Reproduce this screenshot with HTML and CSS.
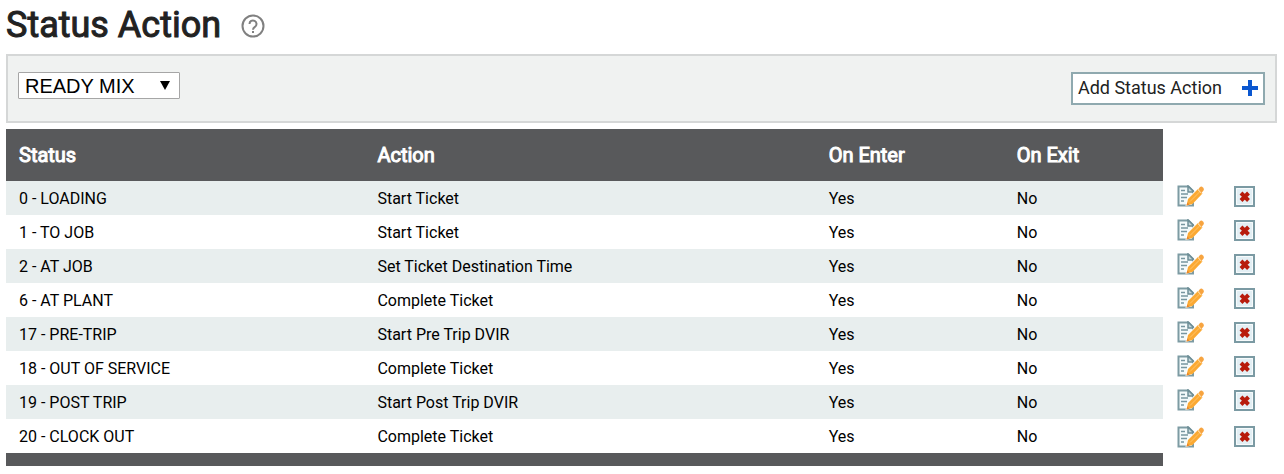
FILE: index.html
```html
<!DOCTYPE html>
<html lang="en">
<head>
    <meta charset="UTF-8">
    <meta name="viewport" content="width=device-width, initial-scale=1.0">
    <title>Status Action</title>
    <link rel="stylesheet" href="styles.css">
</head>
<body>

<!-- row icons -->
<svg class="sprite" aria-hidden="true">
    <symbol id="icon-edit" viewBox="0 0 27 22">
        <path d="M1.5 1.5h10l4.500 4.500v14.500H1.500z" fill="#f4fafb" stroke="#7d9ba3" stroke-width="2"/>
        <path d="M11 1v6h6z" fill="#c5d6da" stroke="#6d8e97" stroke-width="1.500"/>
        <path d="M4 5.500h4M4 9h7M4 12.500h6M4 16h3" stroke="#7796a0" stroke-width="1.600"/>
        <path d="M8.500 21l1.500-7L21.500 2q2-1.500 4 .5t1 4L14.500 19.500z" fill="#fff"/>
        <path d="M9.500 20.500l1.500-6.500L21 4l4.500 4.500L15.500 19z" fill="#fba933"/>
        <path d="M21.500 4l1.500-2q1.500-1 3 .5t.5 3L24.500 8z" fill="#f7a440"/>
        <path d="M13 16.500l9.500-9.500" stroke="#ffc56b" stroke-width="1"/>
        <path d="M20.500 4.500l4 4" stroke="#ffd493" stroke-width="1"/>
        <path d="M9.500 20.500l.8-3 2.200 2z" fill="#e8862c"/>
    </symbol>
    <symbol id="icon-delete" viewBox="0 0 21 21">
        <path d="M1 1h19v19H1z" fill="#e3eff4" stroke="#7b9aa3" stroke-width="2"/>
        <path d="M2.500 2.500h16v16h-16z" fill="none" stroke="#f7fbfc"/>
        <path d="M7 7l7.500 7.500M14.500 7L7 14.500" stroke="#b81c0c" stroke-width="4"/>
    </symbol>
</svg>

<header class="page-header">
    <h1>Status Action</h1>
    <button class="help" type="button" aria-label="Help">
        <svg width="24" height="24" viewBox="0 0 24 24" fill="none" stroke="#808080" stroke-width="2">
            <circle cx="12" cy="12" r="10.500"/>
            <path d="M8.500 10a3.500 3.500 0 1 1 5.500 2.800c-1.300 1-2 1.500-2 3"/>
            <path d="M12 17v2"/>
        </svg>
    </button>
</header>

<div class="toolbar">
    <div class="select-box">
        <select class="product" aria-label="Product">
            <option>READY MIX</option>
        </select>
        <svg class="arrow" width="10" height="10" viewBox="0 0 10 10"><path d="M0 1h10L5 10z"/></svg>
    </div>
    <button class="add" type="button">
        Add Status Action
        <svg width="16" height="16" viewBox="0 0 16 16"><path d="M6 0h4v6h6v4h-6v6H6v-6H0V6h6z" fill="#0b57d0"/></svg>
    </button>
</div>

<table class="grid">
    <colgroup>
        <col class="col-status">
        <col class="col-action">
        <col class="col-enter">
        <col>
        <col class="col-icon">
        <col class="col-icon">
    </colgroup>
    <thead>
        <tr><th>Status</th><th>Action</th><th>On Enter</th><th>On Exit</th></tr>
    </thead>
    <tbody>
        <tr>
            <td>0 - LOADING</td><td>Start Ticket</td><td>Yes</td><td>No</td>
            <td class="tool"><button type="button" aria-label="Edit"><svg width="27" height="22"><use href="#icon-edit"/></svg></button></td>
            <td class="tool"><button type="button" aria-label="Delete"><svg width="21" height="21"><use href="#icon-delete"/></svg></button></td>
        </tr>
        <tr>
            <td>1 - TO JOB</td><td>Start Ticket</td><td>Yes</td><td>No</td>
            <td class="tool"><button type="button" aria-label="Edit"><svg width="27" height="22"><use href="#icon-edit"/></svg></button></td>
            <td class="tool"><button type="button" aria-label="Delete"><svg width="21" height="21"><use href="#icon-delete"/></svg></button></td>
        </tr>
        <tr>
            <td>2 - AT JOB</td><td>Set Ticket Destination Time</td><td>Yes</td><td>No</td>
            <td class="tool"><button type="button" aria-label="Edit"><svg width="27" height="22"><use href="#icon-edit"/></svg></button></td>
            <td class="tool"><button type="button" aria-label="Delete"><svg width="21" height="21"><use href="#icon-delete"/></svg></button></td>
        </tr>
        <tr>
            <td>6 - AT PLANT</td><td>Complete Ticket</td><td>Yes</td><td>No</td>
            <td class="tool"><button type="button" aria-label="Edit"><svg width="27" height="22"><use href="#icon-edit"/></svg></button></td>
            <td class="tool"><button type="button" aria-label="Delete"><svg width="21" height="21"><use href="#icon-delete"/></svg></button></td>
        </tr>
        <tr>
            <td>17 - PRE-TRIP</td><td>Start Pre Trip DVIR</td><td>Yes</td><td>No</td>
            <td class="tool"><button type="button" aria-label="Edit"><svg width="27" height="22"><use href="#icon-edit"/></svg></button></td>
            <td class="tool"><button type="button" aria-label="Delete"><svg width="21" height="21"><use href="#icon-delete"/></svg></button></td>
        </tr>
        <tr>
            <td>18 - OUT OF SERVICE</td><td>Complete Ticket</td><td>Yes</td><td>No</td>
            <td class="tool"><button type="button" aria-label="Edit"><svg width="27" height="22"><use href="#icon-edit"/></svg></button></td>
            <td class="tool"><button type="button" aria-label="Delete"><svg width="21" height="21"><use href="#icon-delete"/></svg></button></td>
        </tr>
        <tr>
            <td>19 - POST TRIP</td><td>Start Post Trip DVIR</td><td>Yes</td><td>No</td>
            <td class="tool"><button type="button" aria-label="Edit"><svg width="27" height="22"><use href="#icon-edit"/></svg></button></td>
            <td class="tool"><button type="button" aria-label="Delete"><svg width="21" height="21"><use href="#icon-delete"/></svg></button></td>
        </tr>
        <tr>
            <td>20 - CLOCK OUT</td><td>Complete Ticket</td><td>Yes</td><td>No</td>
            <td class="tool"><button type="button" aria-label="Edit"><svg width="27" height="22"><use href="#icon-edit"/></svg></button></td>
            <td class="tool"><button type="button" aria-label="Delete"><svg width="21" height="21"><use href="#icon-delete"/></svg></button></td>
        </tr>
    </tbody>
    <tfoot>
        <tr><td colspan="4"></td></tr>
    </tfoot>
</table>

</body>
</html>
```
FILE: styles.css
```css
* {
    box-sizing: border-box;
}

body {
    margin: 0;
    padding: 0 7px 8px 6px;
    font-family: Roboto, Arial, sans-serif;
    font-size: 16px;
    color: #000;
    background-color: #fff;
}

button {
    padding: 0;
    border: none;
    background: none;
    font-family: inherit;
    cursor: pointer;
}

svg {
    display: block;
}

.sprite {
    position: absolute;
    width: 0;
    height: 0;
}

.page-header {
    display: flex;
    align-items: center;
    gap: 20px;
    height: 54px;
    padding-bottom: 2px;
}

.page-header h1 {
    margin: 0;
    padding-bottom: 2px;
    font-size: 36px;
    line-height: 42px;
    font-weight: 400;
    -webkit-text-stroke: 1px #222;
    color: #222;
}

.toolbar {
    display: flex;
    justify-content: space-between;
    align-items: flex-start;
    padding: 16px 10px;
    border: 2px solid #d5d7d7;
    background-color: #f0f2f1;
}

.select-box {
    position: relative;
}

.product {
    appearance: none;
    width: 162px;
    height: 27px;
    padding: 0 6px;
    border: 1px solid #a6a6a6;
    border-radius: 1px;
    background-color: #fff;
    font-family: "Liberation Sans", Arial, sans-serif;
    font-size: 20px;
    color: #000;
}

.arrow {
    position: absolute;
    top: 8px;
    right: 10px;
    pointer-events: none;
}

.add {
    display: flex;
    align-items: center;
    gap: 20px;
    height: 33px;
    padding: 0 5px 2px;
    border: 2px solid #8fa9af;
    background-color: #fff;
    font-size: 18px;
    color: #222;
}

.grid {
    width: 100%;
    margin-top: 6px;
    border-collapse: collapse;
    table-layout: fixed;
}

.col-status {
    width: 28.2%;
}

.col-action {
    width: 35.5%;
}

.col-enter {
    width: 14.8%;
}

.col-icon {
    width: 57px;
}

.grid th {
    height: 52px;
    padding: 0 13px;
    background-color: #58595b;
    color: #fff;
    font-size: 20px;
    font-weight: 400;
    -webkit-text-stroke: 1px #fff;
    text-align: left;
}

.grid td {
    height: 34px;
    padding: 0 13px;
}

.grid tbody tr:nth-child(odd) td {
    background-color: #e8eeee;
}

.grid tbody tr td.tool {
    padding: 0 0 0 14px;
    background-color: #fff;
}

.grid tbody tr:last-child td.tool {
    padding-top: 5px;
}

.grid tfoot td {
    height: 13px;
    background-color: #58595b;
}
```
